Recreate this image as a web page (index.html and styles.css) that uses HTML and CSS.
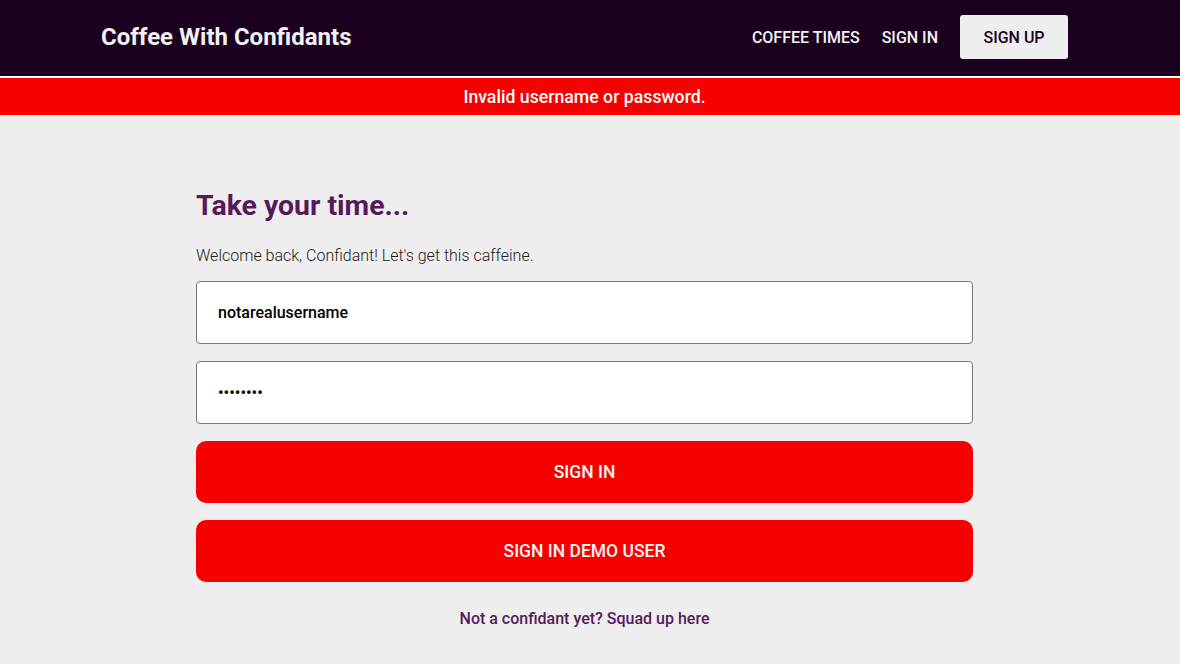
FILE: index.html
```html
<!DOCTYPE html>
<html>
<head>
<meta charset="utf-8">
<link rel="stylesheet" href="styles.css">
</head>
<body>
<header class="topbar">
  <div class="topbar-inner">
    <div class="brand">Coffee With Confidants</div>
    <nav class="nav">
      <a class="nav-link">COFFEE TIMES</a>
      <a class="nav-link">SIGN IN</a>
      <a class="nav-btn">SIGN UP</a>
    </nav>
  </div>
</header>
<div class="alert">Invalid username or password.</div>
<main class="main">
  <form class="form">
    <h1 class="title">Take your time...</h1>
    <p class="lead">Welcome back, Confidant! Let's get this caffeine.</p>
    <input class="field" type="text" value="notarealusername">
    <input class="field" type="password" value="password">
    <button class="btn" type="button">SIGN IN</button>
    <button class="btn" type="button">SIGN IN DEMO USER</button>
    <a class="alt-link">Not a confidant yet? Squad up here</a>
  </form>
</main>
</body>
</html>
```
FILE: styles.css
```css
* { box-sizing: border-box; }
html, body { margin: 0; padding: 0; }
body {
  background: #eeeeee;
  font-family: Roboto, "Liberation Sans", sans-serif;
  color: #222;
}
.topbar {
  background: #1c0020;
  border-bottom: 2px solid #ffffff;
}
.topbar-inner {
  height: 76px;
  display: flex;
  align-items: center;
  justify-content: space-between;
  padding: 0 112px 2px 101px;
}
.brand {
  color: #f1f1f1;
  font-size: 24px;
  font-weight: 700;
}
.nav {
  display: flex;
  align-items: center;
  gap: 22px;
}
.nav-link {
  color: #f1f1f1;
  font-size: 16px;
  font-weight: 500;
}
.nav-btn {
  background: #eeeeee;
  color: #1c0020;
  font-size: 16px;
  font-weight: 500;
  height: 44px;
  width: 108px;
  display: flex;
  align-items: center;
  justify-content: center;
  border-radius: 3px;
}
.alert {
  background: #f70000;
  color: #ffffff;
  height: 37px;
  display: flex;
  align-items: center;
  justify-content: center;
  font-size: 17.7px;
  font-weight: 500;
  padding-right: 11px;
}
.main {
  padding: 71px 0 0 196px;
}
.form {
  width: 777px;
  display: flex;
  flex-direction: column;
}
.title {
  margin: 0;
  font-size: 28.4px;
  font-weight: 700;
  color: #561a5b;
  line-height: 40px;
}
.lead {
  margin: 20px 0 15px;
  font-size: 16px;
  font-weight: 300;
  color: #222;
  line-height: 20px;
}
.field {
  height: 63px;
  margin: 0 0 17px;
  border: 1px solid #777;
  border-radius: 4px;
  background: #fff;
  padding: 0 21px;
  font-family: Roboto, "Liberation Sans", sans-serif;
  font-size: 16px;
  font-weight: 500;
  color: #000;
  outline: none;
}
.btn {
  height: 62px;
  margin: 0 0 17px;
  border: none;
  border-radius: 10px;
  background: #f70000;
  color: #f5f5f5;
  font-family: Roboto, "Liberation Sans", sans-serif;
  font-size: 17.5px;
  font-weight: 500;
}
.alt-link {
  align-self: center;
  margin-top: 10px;
  font-size: 16px;
  font-weight: 500;
  color: #561a5b;
}
```
